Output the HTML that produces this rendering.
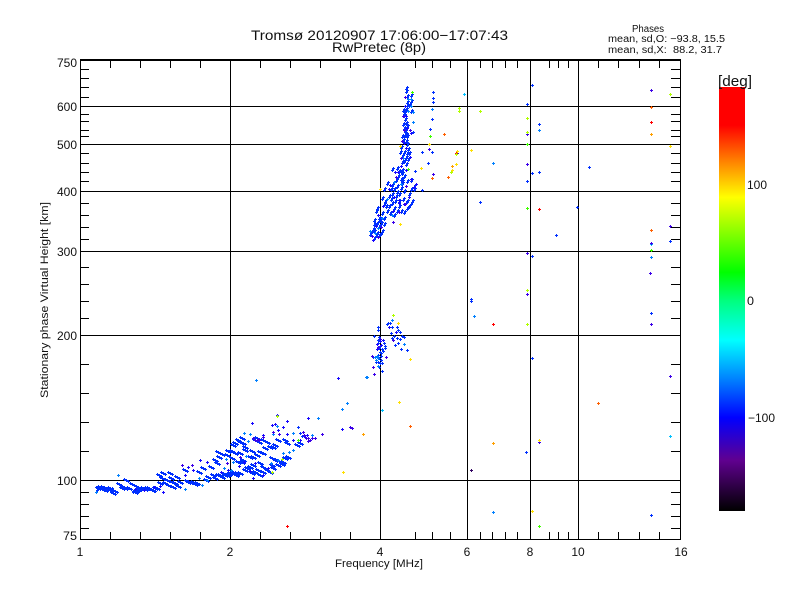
<!DOCTYPE html>
<html><head><meta charset="utf-8"><style>
html,body{margin:0;padding:0;background:#fff;width:800px;height:600px;overflow:hidden}
svg{display:block}
text{font-family:"Liberation Sans",sans-serif;fill:#111}
.g line,.g path{stroke:#000;stroke-width:1;fill:none}
polyline{fill:none;stroke:none}
.b{marker:url(#b)}.l{marker:url(#l)}.d{marker:url(#d)}.p{marker:url(#p)}.c{marker:url(#c)}.r{marker:url(#r)}.o{marker:url(#o)}.a{marker:url(#a)}.y{marker:url(#y)}.n{marker:url(#n)}.e{marker:url(#e)}.k{marker:url(#k)}
</style></head><body>
<svg width="800" height="600" viewBox="0 0 800 600" shape-rendering="crispEdges">
<defs>
<linearGradient id="cb" x1="0" y1="0" x2="0" y2="1">
<stop offset="0" stop-color="#f00"/><stop offset=".09" stop-color="#f00"/><stop offset=".174" stop-color="#ff8000"/><stop offset=".26" stop-color="#ff0"/><stop offset=".437" stop-color="#0f0"/><stop offset=".505" stop-color="#00ff80"/><stop offset=".597" stop-color="#0ff"/><stop offset=".69" stop-color="#0080ff"/><stop offset=".78" stop-color="#00f"/><stop offset=".88" stop-color="#600090"/><stop offset="1" stop-color="#000"/>
</linearGradient>
<marker id="b" markerUnits="userSpaceOnUse" markerWidth="3" markerHeight="3" refX="1" refY="1"><path fill="#0030ff" d="M1 0h1v3H1zM0 1h3v1H0z"/></marker>
<marker id="l" markerUnits="userSpaceOnUse" markerWidth="3" markerHeight="3" refX="1" refY="1"><path fill="#0080ff" d="M1 0h1v3H1zM0 1h3v1H0z"/></marker>
<marker id="d" markerUnits="userSpaceOnUse" markerWidth="3" markerHeight="3" refX="1" refY="1"><path fill="#1808ff" d="M1 0h1v3H1zM0 1h3v1H0z"/></marker>
<marker id="p" markerUnits="userSpaceOnUse" markerWidth="3" markerHeight="3" refX="1" refY="1"><path fill="#3c00e8" d="M1 0h1v3H1zM0 1h3v1H0z"/></marker>
<marker id="c" markerUnits="userSpaceOnUse" markerWidth="3" markerHeight="3" refX="1" refY="1"><path fill="#00c0ff" d="M1 0h1v3H1zM0 1h3v1H0z"/></marker>
<marker id="r" markerUnits="userSpaceOnUse" markerWidth="3" markerHeight="3" refX="1" refY="1"><path fill="#f00" d="M1 0h1v3H1zM0 1h3v1H0z"/></marker>
<marker id="o" markerUnits="userSpaceOnUse" markerWidth="3" markerHeight="3" refX="1" refY="1"><path fill="#ff6000" d="M1 0h1v3H1zM0 1h3v1H0z"/></marker>
<marker id="a" markerUnits="userSpaceOnUse" markerWidth="3" markerHeight="3" refX="1" refY="1"><path fill="#ffa000" d="M1 0h1v3H1zM0 1h3v1H0z"/></marker>
<marker id="y" markerUnits="userSpaceOnUse" markerWidth="3" markerHeight="3" refX="1" refY="1"><path fill="#ffe000" d="M1 0h1v3H1zM0 1h3v1H0z"/></marker>
<marker id="n" markerUnits="userSpaceOnUse" markerWidth="3" markerHeight="3" refX="1" refY="1"><path fill="#b0ff00" d="M1 0h1v3H1zM0 1h3v1H0z"/></marker>
<marker id="e" markerUnits="userSpaceOnUse" markerWidth="3" markerHeight="3" refX="1" refY="1"><path fill="#40ff00" d="M1 0h1v3H1zM0 1h3v1H0z"/></marker>
<marker id="k" markerUnits="userSpaceOnUse" markerWidth="3" markerHeight="3" refX="1" refY="1"><path fill="#300060" d="M1 0h1v3H1zM0 1h3v1H0z"/></marker>
</defs>
<rect width="800" height="600" fill="#fff"/>

<!-- frame, grid and ticks -->
<rect x="80" y="59" width="601" height="2" fill="#000"/>
<g class="g">
<path d="M80.5 60V540M680.5 60V540M80 539.5H681"/>
<path d="M230.5 60V540M380.5 60V540M467.5 60V540M530.5 60V540M578.5 60V540"/>
<path d="M80 106.5H681M80 144.5H681M80 191.5H681M80 251.5H681M80 335.5H681M80 480.5H681"/>
<path d="M110.5 60v8M140.5 60v8M170.5 60v8M200.5 60v8M260.5 60v8M290.5 60v8M320.5 60v8M350.5 60v8M415.5 60v8M432.5 60v8M450.5 60v8M480.5 60v8M492.5 60v8M505.5 60v8M517.5 60v8M549.5 60v8M558.5 60v8M568.5 60v8M598.5 60v8M618.5 60v8M639.5 60v8M659.5 60v8"/>
<path d="M110.5 539v-7M140.5 539v-7M170.5 539v-7M200.5 539v-7M260.5 539v-7M290.5 539v-7M320.5 539v-7M350.5 539v-7M415.5 539v-7M432.5 539v-7M450.5 539v-7M480.5 539v-7M492.5 539v-7M505.5 539v-7M517.5 539v-7M549.5 539v-7M558.5 539v-7M568.5 539v-7M598.5 539v-7M618.5 539v-7M639.5 539v-7M659.5 539v-7"/>
<path d="M80 69.5h9M80 78.5h9M80 87.5h9M80 97.5h9M80 114.5h9M80 121.5h9M80 130.5h9M80 136.5h9M80 153.5h9M80 163.5h9M80 172.5h9M80 181.5h9M80 203.5h9M80 215.5h9M80 227.5h9M80 239.5h9M80 267.5h9M80 284.5h9M80 301.5h9M80 318.5h9M80 364.5h9M80 393.5h9M80 422.5h9M80 451.5h9M80 492.5h9M80 504.5h9M80 516.5h9M80 528.5h9"/>
<path d="M680 69.5h-9M680 78.5h-9M680 87.5h-9M680 97.5h-9M680 114.5h-9M680 121.5h-9M680 130.5h-9M680 136.5h-9M680 153.5h-9M680 163.5h-9M680 172.5h-9M680 181.5h-9M680 203.5h-9M680 215.5h-9M680 227.5h-9M680 239.5h-9M680 267.5h-9M680 284.5h-9M680 301.5h-9M680 318.5h-9M680 364.5h-9M680 393.5h-9M680 422.5h-9M680 451.5h-9M680 492.5h-9M680 504.5h-9M680 516.5h-9M680 528.5h-9"/>
</g>

<!-- lower (E) trace -->
<polyline id="lo" class="b" points="98,488 100,487 102,489 103,487 105,490 106,488 108,489 110,488 111,490 113,493 115,491 119,484 122,488 124,487 126,480 125,488 129,488 132,484 134,485 135,492 136,491 137,490 139,489 140,488 142,489 143,488 145,489 147,488 149,488 150,489 152,490 153,490 155,488 157,488 160,483 159,475 163,473 162,478 167,480 165,483 168,485 170,473 172,482 173,487 171,478 177,477 175,483 180,482 178,486 185,470 187,481 188,482 190,482 193,482 195,484 197,483 199,472 203,468 208,477 206,480 211,467 215,460 217,463 213,475 215,478 218,475 220,475 222,477 225,475 227,475 229,474 230,473 233,472 236,475 237,473 240,473 223,473 219,457 218,452 222,454 227,455 228,451 232,451 235,453 232,458 238,462 240,453 242,462 243,460 245,470 247,468 250,467 252,473 255,472 253,465 257,455 260,452 263,453 260,463 263,467 263,472 267,470 270,472 272,465 273,468 275,460 277,460 278,465 282,464 283,462 285,458 288,457 260,475 258,470 235,443 238,440 240,442 242,438 243,443 233,445 245,447 245,450 252,451 253,457 250,457 255,440 257,438 259,442 263,440 265,448 267,442 270,447 273,447 275,445 272,458 278,440 285,440 287,443 297,445 300,443"/>
<use href="#lo" transform="translate(2,1)"/>
<use href="#lo" transform="translate(-2,-1)"/>
<polyline class="b" points="97,490 112,488 133,492 303,432 298,427 287,434 300,433 302,436"/>
<polyline class="l" points="118,475 96,492 185,489 199,478 202,485 207,480 224,468 244,433 250,434 248,441 273,434 277,426 293,433 293,450 283,453 278,460 282,459 289,452 256,380 318,418 312,435 347,403 342,409 231,470 246,456 233,462 271,463 226,459"/>
<polyline class="d" points="135,489 144,490 160,486 163,492 154,487 188,467 193,470 185,475 200,460 207,462 221,472 239,466 228,470 250,471 252,423 263,435 272,425 275,424 277,415 278,430 283,427 287,421 287,434 308,418 338,378 342,429 300,440 305,437 307,435 293,440 268,468 255,463 244,462 253,478 263,475"/>
<polyline class="p" points="192,465 182,465 227,463 240,457 253,438 255,440 257,440 259,440 263,437 258,439 273,432 279,434 303,432 306,438 308,438 310,440 308,441 312,438 322,434 350,427 352,428 315,438 304,435"/>

<!-- F1 cluster -->
<polyline id="f1" class="b" points="388,323 387,324 390,323 397,327 392,327 398,330 400,332 378,327 378,330 374,336 379,337 391,333 392,338 397,338 400,339 404,337 398,343 407,350 401,349 378,343 384,343 385,346 385,348 383,351 379,348 380,352 378,355 381,353 381,360 378,362 380,363 382,363 379,367 382,371 373,357 378,340 380,346 379,358 376,362 382,349 381,356 394,336 402,336 395,345"/>
<polyline class="l" points="392,320 377,356 375,357 378,358 404,344 366,377 378,366 376,360"/>
<polyline class="p" points="372,356 386,357 393,340 373,367 374,374 378,347 380,339"/>
<polyline class="d" points="381,345 377,349 380,341 377,344 383,340 396,332 389,327"/>

<!-- F2 cluster -->
<polyline id="f2" class="b" points="407,87 407,90 408,95 412,94 412,100 408,101 410,104 408,104 404,109 407,108 405,112 412,110 405,114 404,123 407,122 405,127 408,125 406,130 407,133 403,135 408,135 404,139 407,140 408,143 402,146 401,151 405,151 403,155 408,152 407,156 403,161 393,168 398,167 400,170 403,169 405,175 399,175 402,178 403,182 397,179 393,184 388,182 395,188 398,185 402,187 392,188 385,188 390,195 383,197 393,193 397,195 400,193 405,190 410,193 415,185 415,188 412,188 408,180 412,179 385,203 390,205 393,202 400,200 400,205 407,201 408,200 412,202 413,200 395,207 398,210 402,210 405,211 408,207 378,207 377,210 383,212 388,210 380,217 385,217 375,219 378,222 382,222 375,223 380,225 372,231 375,230 383,230 382,232 377,234 380,234 375,237 385,223 410,152 403,155 407,163 402,170 403,180 405,160 409,158 386,200 392,198 396,200 391,212 387,205 395,214 374,228 378,232 371,233 405,135 406,118 403,172 409,148 398,191 404,198 410,205 381,219"/>
<use href="#f2" transform="translate(-1,2)"/>
<polyline class="l" points="408,99 411,99 413,122 403,158 408,111 411,106 413,112 401,184 392,215 378,228 375,233 370,231 387,199 382,218 394,182"/>
<polyline class="d" points="405,106 406,116 407,128 411,133 404,143 406,148 410,157 401,166 395,172 389,189 394,197 399,203 404,204 409,197 415,171 414,187 416,184 422,190 411,179 373,240 376,226 378,215 383,206 393,211 390,185 398,172 406,170 399,200"/>
<polyline class="p" points="403,116 404,130 402,141 401,158 396,177 406,186 405,204 399,212 393,222 381,227 372,236 378,237 410,130 405,97"/>

<!-- scattered blue and purple points -->
<polyline class="b" points="433,92 433,98 433,102 527,104 432,119 430,129 413,132 422,152 432,152 422,190 428,163 433,174 415,171 532,85 539,124 532,173 539,172 527,181 480,202 577,207 556,235 670,241 532,256 471,299 471,301 651,313 532,358 526,452 651,515 589,167 457,153"/>
<polyline class="l" points="432,109 464,94 539,130 651,257 474,316 493,512 493,163 382,410 367,377"/>
<polyline class="c" points="651,244 670,436 464,94 382,410"/>
<polyline class="p" points="651,90 527,134 429,149 433,174 527,164 670,226 651,243 527,253 650,273 527,294 651,324 670,376 539,442"/>
<polyline class="k" points="471,470"/>

<!-- coloured points -->
<polyline class="r" points="287,526 493,324 539,209 456,153 651,122"/>
<polyline class="o" points="651,107 444,134 432,178 651,230 448,177 598,403 410,426 651,134"/>
<polyline class="a" points="363,434 493,443 452,166 651,134"/>
<polyline class="y" points="670,146 429,144 471,150 457,151 456,164 452,170 421,168 398,323 410,359 343,472 399,402 532,511 539,440 380,189 400,224 400,146"/>
<polyline class="n" points="670,94 459,108 459,111 480,111 527,118 527,132 456,154 451,172 393,315 527,290 527,324 277,416 272,472 282,459"/>
<polyline class="e" points="430,136 527,144 527,208 651,250 539,526 408,169 298,440 412,92"/>

<!-- colour bar -->
<rect x="719" y="87" width="26" height="424" fill="url(#cb)"/>

<!-- text -->
<g shape-rendering="auto">
<text x="251" y="40" font-size="14" textLength="257" lengthAdjust="spacingAndGlyphs">Tromsø 20120907 17:06:00−17:07:43</text>
<text x="332" y="52" font-size="14" textLength="94" lengthAdjust="spacingAndGlyphs">RwPretec (8p)</text>
<text x="632" y="32" font-size="10" textLength="32" lengthAdjust="spacingAndGlyphs">Phases</text>
<text x="608" y="42" font-size="10" textLength="117" lengthAdjust="spacingAndGlyphs">mean, sd,O: −93.8, 15.5</text>
<text x="608" y="53" font-size="10" textLength="114" lengthAdjust="spacingAndGlyphs" xml:space="preserve">mean, sd,X:  88.2, 31.7</text>

<text x="57" y="67" font-size="12" textLength="20" lengthAdjust="spacingAndGlyphs">750</text>
<text x="57" y="111" font-size="12" textLength="20" lengthAdjust="spacingAndGlyphs">600</text>
<text x="57" y="149" font-size="12" textLength="20" lengthAdjust="spacingAndGlyphs">500</text>
<text x="57" y="196" font-size="12" textLength="20" lengthAdjust="spacingAndGlyphs">400</text>
<text x="57" y="256" font-size="12" textLength="20" lengthAdjust="spacingAndGlyphs">300</text>
<text x="57" y="340" font-size="12" textLength="20" lengthAdjust="spacingAndGlyphs">200</text>
<text x="57" y="485" font-size="12" textLength="20" lengthAdjust="spacingAndGlyphs">100</text>
<text x="63" y="540" font-size="12" textLength="14" lengthAdjust="spacingAndGlyphs">75</text>

<text x="80" y="556" font-size="12" text-anchor="middle">1</text>
<text x="230" y="556" font-size="12" text-anchor="middle">2</text>
<text x="380" y="556" font-size="12" text-anchor="middle">4</text>
<text x="467" y="556" font-size="12" text-anchor="middle">6</text>
<text x="530" y="556" font-size="12" text-anchor="middle">8</text>
<text x="578" y="556" font-size="12" text-anchor="middle">10</text>
<text x="681" y="556" font-size="12" text-anchor="middle">16</text>

<text x="335" y="567" font-size="11" textLength="88" lengthAdjust="spacingAndGlyphs">Frequency [MHz]</text>
<text transform="translate(48,398) rotate(-90)" font-size="11" textLength="196" lengthAdjust="spacingAndGlyphs">Stationary phase Virtual Height [km]</text>

<text x="718" y="86" font-size="15" textLength="34" lengthAdjust="spacingAndGlyphs">[deg]</text>
<text x="747" y="189" font-size="12" textLength="20" lengthAdjust="spacingAndGlyphs">100</text>
<text x="747" y="305" font-size="12" textLength="7" lengthAdjust="spacingAndGlyphs">0</text>
<text x="748" y="422" font-size="12" textLength="27" lengthAdjust="spacingAndGlyphs">−100</text>
</g>
</svg>
</body></html>
